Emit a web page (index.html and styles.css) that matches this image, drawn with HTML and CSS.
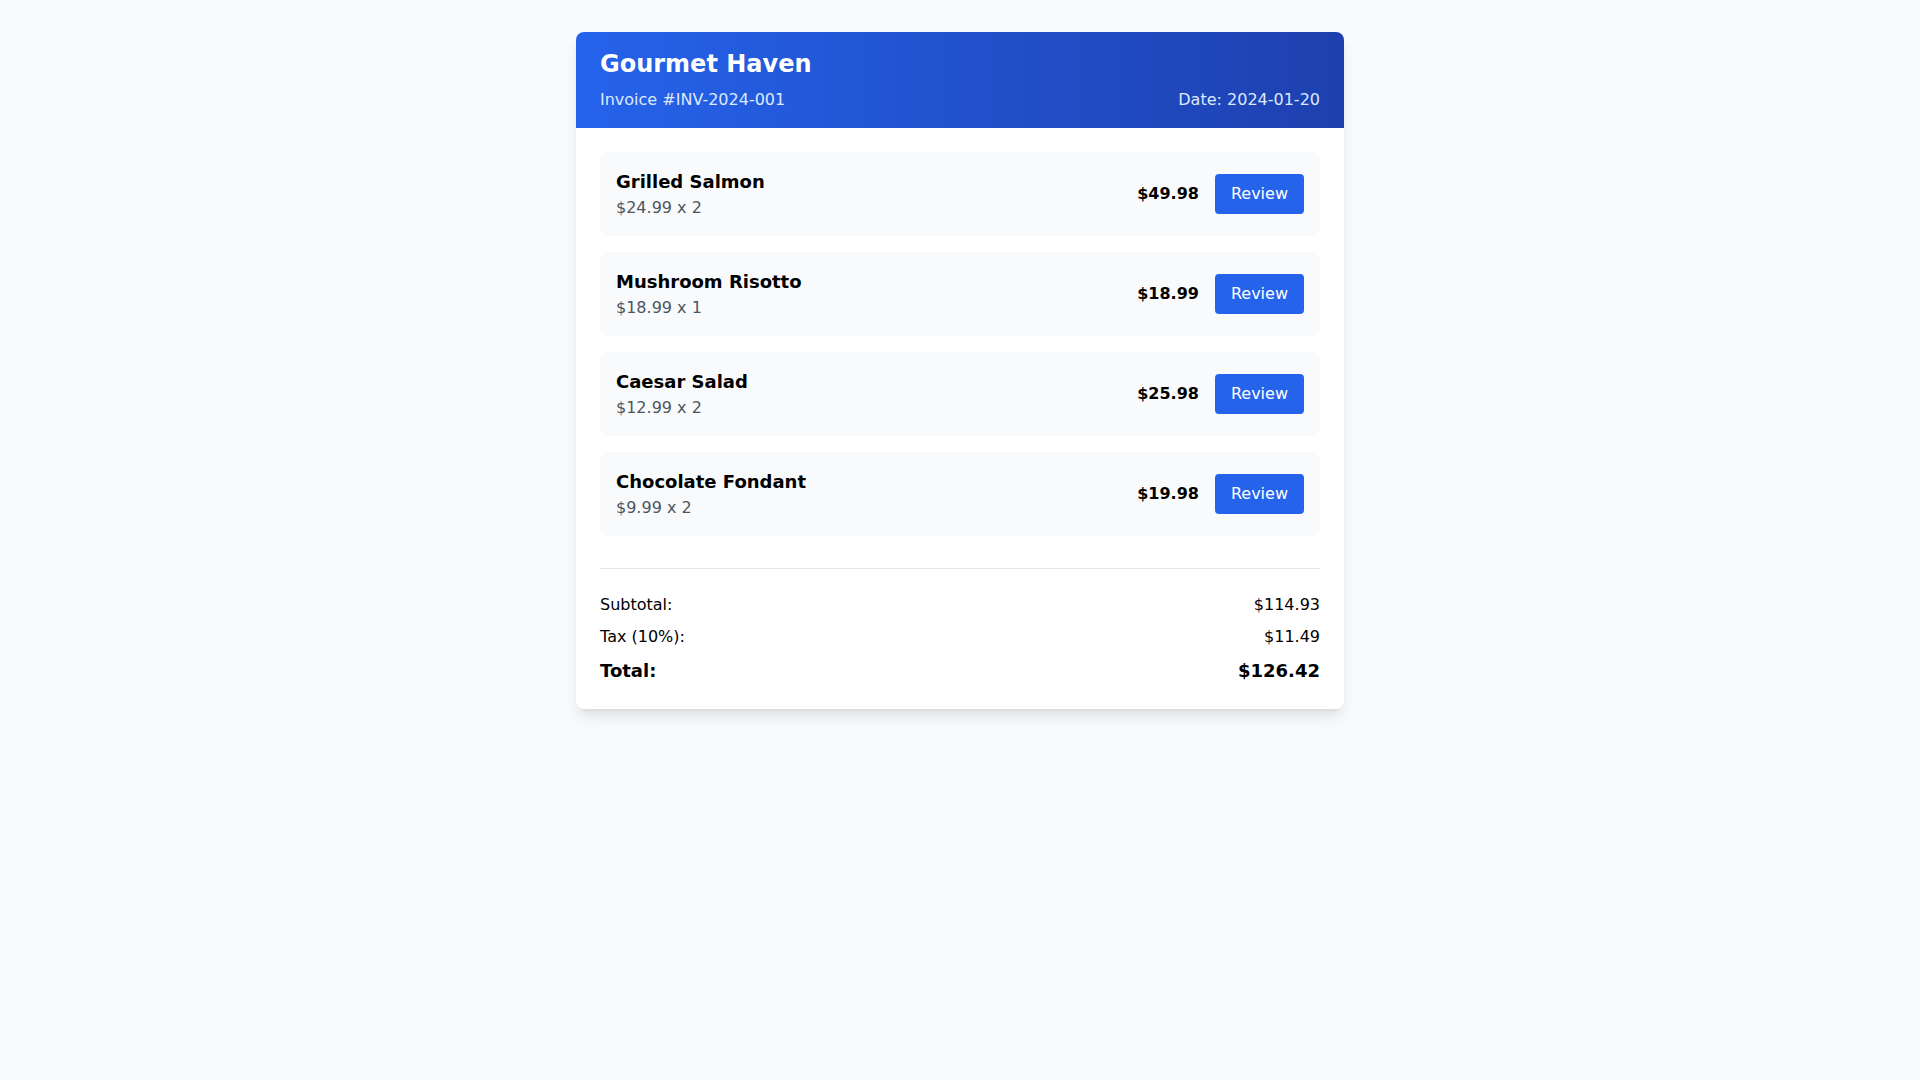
FILE: index.html
```html
<!DOCTYPE html>
<html lang="en">
<head>
    <meta charset="UTF-8">
    <meta name="viewport" content="width=device-width, initial-scale=1.0">
    <title>Gourmet Haven - Invoice</title>
    <link rel="stylesheet" href="styles.css">
</head>
<body>
    <div class="invoice">
        <div class="invoice-header">
            <h1>Gourmet Haven</h1>
            <div class="invoice-meta">
                <span>Invoice #INV-2024-001</span>
                <span>Date: 2024-01-20</span>
            </div>
        </div>

        <div class="invoice-body">
            <div class="items">
                <div class="item">
                    <div class="item-info">
                        <h3>Grilled Salmon</h3>
                        <p>$24.99 x 2</p>
                    </div>
                    <div class="item-actions">
                        <span class="item-price">$49.98</span>
                        <button class="review-btn">Review</button>
                    </div>
                </div>
                <div class="item">
                    <div class="item-info">
                        <h3>Mushroom Risotto</h3>
                        <p>$18.99 x 1</p>
                    </div>
                    <div class="item-actions">
                        <span class="item-price">$18.99</span>
                        <button class="review-btn">Review</button>
                    </div>
                </div>
                <div class="item">
                    <div class="item-info">
                        <h3>Caesar Salad</h3>
                        <p>$12.99 x 2</p>
                    </div>
                    <div class="item-actions">
                        <span class="item-price">$25.98</span>
                        <button class="review-btn">Review</button>
                    </div>
                </div>
                <div class="item">
                    <div class="item-info">
                        <h3>Chocolate Fondant</h3>
                        <p>$9.99 x 2</p>
                    </div>
                    <div class="item-actions">
                        <span class="item-price">$19.98</span>
                        <button class="review-btn">Review</button>
                    </div>
                </div>
            </div>

            <div class="totals">
                <div class="total-row">
                    <span>Subtotal:</span>
                    <span>$114.93</span>
                </div>
                <div class="total-row">
                    <span>Tax (10%):</span>
                    <span>$11.49</span>
                </div>
                <div class="total-row grand">
                    <span>Total:</span>
                    <span>$126.42</span>
                </div>
            </div>
        </div>
    </div>
</body>
</html>
```

FILE: styles.css
```css
body {
    font-family: "DejaVu Sans", sans-serif;
    margin: 0;
    padding: 0;
    background-color: #f9fafb;
    color: #000;
}
.invoice {
    max-width: 768px;
    margin: 32px auto;
    background: white;
    border-radius: 8px;
    overflow: hidden;
    box-shadow: 0 10px 15px -3px rgba(0, 0, 0, 0.1), 0 4px 6px -4px rgba(0, 0, 0, 0.1);
}
.invoice-header {
    background: linear-gradient(to right, #2563eb, #1e40af);
    color: white;
    padding: 16px 24px;
}
.invoice-header h1 {
    margin: 0;
    font-size: 24px;
    line-height: 32px;
    font-weight: bold;
}
.invoice-meta {
    display: flex;
    justify-content: space-between;
    margin-top: 8px;
    font-size: 16px;
    line-height: 24px;
    color: #dbeafe;
}
.invoice-body {
    padding: 24px;
}
.items {
    display: flex;
    flex-direction: column;
    gap: 16px;
}
.item {
    display: flex;
    justify-content: space-between;
    align-items: center;
    padding: 16px;
    background-color: #f9fafb;
    border-radius: 8px;
}
.item-info h3 {
    margin: 0;
    font-size: 18px;
    line-height: 28px;
    font-weight: bold;
}
.item-info p {
    margin: 0;
    font-size: 16px;
    line-height: 24px;
    color: #4b5563;
}
.item-actions {
    display: flex;
    align-items: center;
    gap: 16px;
}
.item-price {
    font-weight: bold;
    font-size: 16px;
    line-height: 24px;
}
.review-btn {
    font-family: inherit;
    font-size: 16px;
    line-height: 24px;
    background-color: #2563eb;
    color: white;
    border: none;
    padding: 8px 16px;
    border-radius: 4px;
    cursor: pointer;
}
.totals {
    margin-top: 32px;
    padding-top: 24px;
    border-top: 1px solid #e5e7eb;
    display: flex;
    flex-direction: column;
    gap: 8px;
}
.total-row {
    display: flex;
    justify-content: space-between;
    font-size: 16px;
    line-height: 24px;
}
.total-row.grand {
    font-size: 18px;
    line-height: 28px;
    font-weight: bold;
}
```
